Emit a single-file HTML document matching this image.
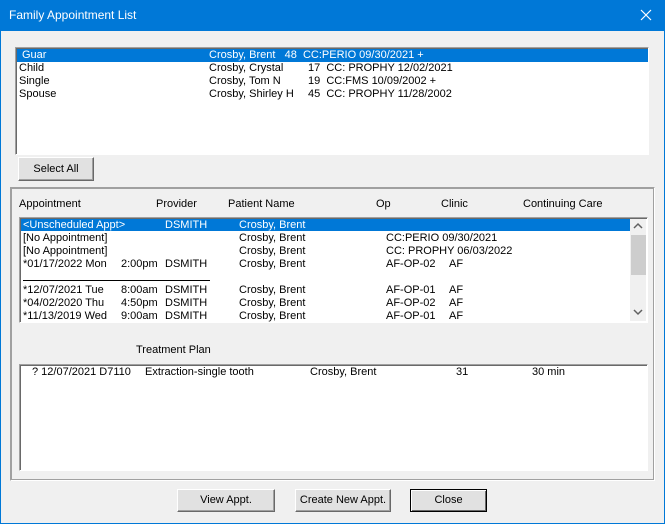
<!DOCTYPE html>
<html><head><style>
*{margin:0;padding:0;box-sizing:border-box}
body{width:665px;height:524px;background:#f0f0f0;position:relative;overflow:hidden;font-family:"Liberation Sans",sans-serif;font-size:11px;color:#000}
.a{position:absolute;white-space:nowrap}
.box{position:absolute;background:#fff;border:1px solid;border-color:#a0a0a0 #fff #fff #a0a0a0;box-shadow:inset 1px 1px 0 #696969}
.btn{position:absolute;background:#e1e1e1;border:1px solid;border-color:#fff #696969 #696969 #fff;box-shadow:inset -1px -1px 0 #a0a0a0;text-align:center;line-height:20px}
.sel{position:absolute;background:#0078d7;color:#fff}
.t{}
</style></head><body>
<div class="a" style="left:0;top:0;width:665px;height:31px;background:#0078d7"></div>
<div class="a" style="left:0;top:0;width:665px;height:524px;border:1px solid #0078d7;border-top:none"></div>
<div class="a" style="left:9px;top:8px;color:#fff;font-size:12px">Family Appointment List</div>
<svg class="a" style="left:640px;top:9px" width="12" height="12"><path d="M1 1L11 11M11 1L1 11" stroke="#fff" stroke-width="1.2"/></svg>

<div class="box" style="left:15px;top:47px;width:634px;height:108px"></div>
<div class="sel" style="left:17px;top:49px;width:631px;height:13px"></div>
<div class="a t" style="left:22px;top:49px;color:#fff">Guar</div>
<div class="a t" style="left:209px;top:49px;color:#fff">Crosby, Brent &nbsp;&nbsp;48 &nbsp;CC:PERIO 09/30/2021 +</div>
<div class="a t" style="left:19px;top:62px">Child</div><div class="a t" style="left:209px;top:62px">Crosby, Crystal</div><div class="a t" style="left:308px;top:62px">17 &nbsp;CC: PROPHY 12/02/2021</div>
<div class="a t" style="left:19px;top:75px">Single</div><div class="a t" style="left:209px;top:75px">Crosby, Tom N</div><div class="a t" style="left:308px;top:75px">19 &nbsp;CC:FMS 10/09/2002 +</div>
<div class="a t" style="left:19px;top:88px">Spouse</div><div class="a t" style="left:209px;top:88px">Crosby, Shirley H</div><div class="a t" style="left:308px;top:88px">45 &nbsp;CC: PROPHY 11/28/2002</div>

<div class="btn" style="left:18px;top:157px;width:76px;height:24px;line-height:22px">Select All</div>

<div class="a" style="left:10px;top:187px;width:645px;height:294px;border:1px solid;border-color:#a0a0a0 #fff #fff #a0a0a0;box-shadow:1px 1px 0 #a0a0a0 inset,-1px -1px 0 #a0a0a0 inset"></div>
<div class="a t" style="left:19px;top:198px">Appointment</div>
<div class="a t" style="left:156px;top:198px">Provider</div>
<div class="a t" style="left:228px;top:198px">Patient Name</div>
<div class="a t" style="left:376px;top:198px">Op</div>
<div class="a t" style="left:441px;top:198px">Clinic</div>
<div class="a t" style="left:523px;top:198px">Continuing Care</div>

<div class="box" style="left:19px;top:217px;width:629px;height:106px"></div>
<div class="sel" style="left:21px;top:219px;width:609px;height:12px"></div>
<div class="a" style="left:630px;top:219px;width:16px;height:102px;background:#f0f0f0"></div>
<div class="a" style="left:631px;top:235px;width:15px;height:40px;background:#cdcdcd"></div>
<svg class="a" style="left:633px;top:222px" width="10" height="8"><path d="M1 6L5 2L9 6" stroke="#606060" stroke-width="1.5" fill="none"/></svg>
<svg class="a" style="left:633px;top:308px" width="10" height="8"><path d="M1 2L5 6L9 2" stroke="#606060" stroke-width="1.5" fill="none"/></svg>
<div class="a t" style="left:23px;top:219px;color:#fff">&lt;Unscheduled Appt&gt;</div>
<div class="a t" style="left:165px;top:219px;color:#fff">DSMITH</div>
<div class="a t" style="left:239px;top:219px;color:#fff">Crosby, Brent</div>
<div class="a t" style="left:23px;top:232px">[No Appointment]</div><div class="a t" style="left:239px;top:232px">Crosby, Brent</div><div class="a t" style="left:386px;top:232px">CC:PERIO 09/30/2021</div>
<div class="a t" style="left:23px;top:245px">[No Appointment]</div><div class="a t" style="left:239px;top:245px">Crosby, Brent</div><div class="a t" style="left:386px;top:245px">CC: PROPHY 06/03/2022</div>
<div class="a t" style="left:23px;top:258px">*01/17/2022 Mon</div><div class="a t" style="left:121px;top:258px">2:00pm</div><div class="a t" style="left:165px;top:258px">DSMITH</div><div class="a t" style="left:239px;top:258px">Crosby, Brent</div><div class="a t" style="left:386px;top:258px">AF-OP-02</div><div class="a t" style="left:449px;top:258px">AF</div>
<div class="a" style="left:23px;top:280px;width:187px;height:1px;background:#000"></div>
<div class="a t" style="left:23px;top:284px">*12/07/2021 Tue</div><div class="a t" style="left:121px;top:284px">8:00am</div><div class="a t" style="left:165px;top:284px">DSMITH</div><div class="a t" style="left:239px;top:284px">Crosby, Brent</div><div class="a t" style="left:386px;top:284px">AF-OP-01</div><div class="a t" style="left:449px;top:284px">AF</div>
<div class="a t" style="left:23px;top:297px">*04/02/2020 Thu</div><div class="a t" style="left:121px;top:297px">4:50pm</div><div class="a t" style="left:165px;top:297px">DSMITH</div><div class="a t" style="left:239px;top:297px">Crosby, Brent</div><div class="a t" style="left:386px;top:297px">AF-OP-02</div><div class="a t" style="left:449px;top:297px">AF</div>
<div class="a t" style="left:23px;top:310px">*11/13/2019 Wed</div><div class="a t" style="left:121px;top:310px">9:00am</div><div class="a t" style="left:165px;top:310px">DSMITH</div><div class="a t" style="left:239px;top:310px">Crosby, Brent</div><div class="a t" style="left:386px;top:310px">AF-OP-01</div><div class="a t" style="left:449px;top:310px">AF</div>

<div class="a t" style="left:136px;top:344px">Treatment Plan</div>
<div class="box" style="left:19px;top:364px;width:629px;height:107px"></div>
<div class="a t" style="left:32px;top:366px">? 12/07/2021 D7110</div>
<div class="a t" style="left:145px;top:366px">Extraction-single tooth</div>
<div class="a t" style="left:310px;top:366px">Crosby, Brent</div>
<div class="a t" style="left:456px;top:366px">31</div>
<div class="a t" style="left:532px;top:366px">30 min</div>

<div class="btn" style="left:177px;top:489px;width:98px;height:23px">View Appt.</div>
<div class="btn" style="left:295px;top:489px;width:96px;height:23px">Create New Appt.</div>
<div class="btn" style="left:410px;top:489px;width:77px;height:23px;border:1px solid #000;box-shadow:inset 1px 1px 0 #fff,inset -1px -1px 0 #696969">Close</div>
</body></html>
